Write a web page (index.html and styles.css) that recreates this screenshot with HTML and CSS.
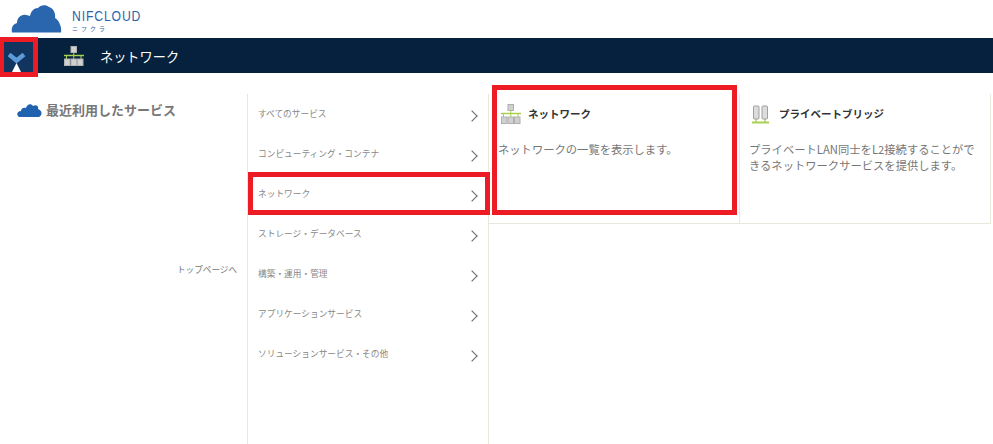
FILE: index.html
```html
<!DOCTYPE html>
<html>
<head>
    <title>NIFCLOUD ネットワーク</title>
    <link rel="stylesheet" href="styles.css">
</head>
<body>
    <div class="logo-bar">
        <svg class="logo-cloud" width="51" height="28" viewBox="0 0 51 28">
            <path fill="#2a66ad" d="M1 27.5 C0 23 2 19 6 18 C6 13 10 9 15 10 C17 10 18 11 19 11 C20 6 23 3 27 3 C29 0 35 -1 38 2 C42 3 45 8 44 13 C48 15 51 22 50 27.5 Z"/>
        </svg>
        <div class="logo-text">
            <div class="logo-name">NIFCLOUD</div>
            <div class="logo-kana">ニフクラ</div>
        </div>
    </div>

    <div class="nav-bar">
        <div class="nav-toggle">
            <svg width="18" height="20" viewBox="0 0 18 20">
                <path fill="none" stroke="#5b9bd8" stroke-width="4.5" d="M1 1.5 L8.5 7.5 L16 1.5"/>
                <path fill="#fff" d="M8.5 10 L13.5 20 L3.5 20 Z"/>
            </svg>
        </div>
        <svg class="net-icon nav-icon" width="20" height="20" viewBox="0 0 20 20">
            <use href="#network"/>
        </svg>
        <div class="nav-title">ネットワーク</div>
    </div>

    <svg class="defs" width="0" height="0">
        <defs>
            <g id="network">
                <rect x="7" y="0.5" width="5.5" height="6" fill="#d0d0d0" stroke="#b0b0b0"/>
                <path d="M9.75 6.5 V9 M2.5 10 V13 M9.75 10 V13 M17 10 V13" stroke="#a8d050" fill="none"/>
                <path d="M0 9.5 H20" stroke="#a8d050" stroke-width="1.5"/>
                <rect x="0.5" y="13" width="5.5" height="6.5" fill="#d0d0d0" stroke="#b0b0b0"/>
                <rect x="7" y="13" width="5.5" height="6.5" fill="#d0d0d0" stroke="#b0b0b0"/>
                <rect x="13.5" y="13" width="5.5" height="6.5" fill="#d0d0d0" stroke="#b0b0b0"/>
            </g>
        </defs>
    </svg>

    <div class="main">
        <div class="side">
            <div class="recent">
                <svg width="25" height="15" viewBox="0 0 25 15">
                    <path fill="#1f62b0" d="M2 15 C-1 13 0 9 4 9 C4 6 7 5 9 6 C10 2 14 1 16 4 C19 2 22 4 21 7 C25 8 26 13 22 15 Z"/>
                </svg>
                <span>最近利用したサービス</span>
            </div>
            <div class="top-link">トップページへ</div>
        </div>

        <div class="menu">
            <div class="menu-item"><span>すべてのサービス</span><i class="chev"></i></div>
            <div class="menu-item"><span>コンピューティング・コンテナ</span><i class="chev"></i></div>
            <div class="menu-item"><span>ネットワーク</span><i class="chev"></i></div>
            <div class="menu-item"><span>ストレージ・データベース</span><i class="chev"></i></div>
            <div class="menu-item"><span>構築・運用・管理</span><i class="chev"></i></div>
            <div class="menu-item"><span>アプリケーションサービス</span><i class="chev"></i></div>
            <div class="menu-item"><span>ソリューションサービス・その他</span><i class="chev"></i></div>
        </div>

        <div class="cards">
            <div class="card">
                <div class="card-head">
                    <svg width="20" height="20" viewBox="0 0 20 20"><use href="#network"/></svg>
                    <span>ネットワーク</span>
                </div>
                <p class="card-text card-text-first">ネットワークの一覧を表示します。</p>
            </div>
            <div class="card">
                <div class="card-head card-head-bridge">
                    <svg width="18" height="19" viewBox="0 0 18 19">
                        <rect x="1.5" y="1" width="5.5" height="13" rx="1" fill="#dcdcdc" stroke="#a0a0a0"/>
                        <rect x="10" y="1" width="5.5" height="13" rx="1" fill="#dcdcdc" stroke="#a0a0a0"/>
                        <path d="M4 14 V17 M13 14 V17" stroke="#8fb840" fill="none"/>
                        <path d="M0 17.5 H17" stroke="#a8d050" stroke-width="2"/>
                    </svg>
                    <span>プライベートブリッジ</span>
                </div>
                <p class="card-text card-text-bridge">プライベートLAN同士をL2接続することができるネットワークサービスを提供します。</p>
            </div>
        </div>
    </div>

    <div class="mark mark-toggle"></div>
    <div class="mark mark-menu"></div>
    <div class="mark mark-card"></div>
</body>
</html>
```

FILE: styles.css
```css
html, body {
    height: 100%;
}
body {
    margin: 0;
    height: 444px;
    overflow: hidden;
    background-color: #fff;
    color: #777;
    font-family: "Noto Sans CJK JP", "Noto Sans", sans-serif;
    position: relative;
}
.logo-bar {
    height: 38px;
    display: flex;
    align-items: flex-start;
    padding: 5px 0 0 11px;
    box-sizing: border-box;
}
.logo-text {
    margin-left: 10px;
    padding-top: 4px;
    color: #2a66ad;
}
.logo-name {
    font-family: "Liberation Sans", sans-serif;
    font-size: 14px;
    line-height: 14px;
    letter-spacing: 1px;
    transform: scaleX(0.87);
    transform-origin: left;
}
.logo-kana {
    margin-top: 2px;
    font-size: 6px;
    line-height: 7px;
    letter-spacing: 3px;
}
.nav-bar {
    height: 35px;
    background-color: #05213d;
    display: flex;
    align-items: center;
}
.nav-toggle {
    width: 33px;
    height: 35px;
    background-color: #123560;
    display: flex;
    justify-content: center;
    align-items: flex-end;
}
.nav-icon {
    margin-left: 31px;
}
.nav-title {
    margin: 1px 0 0 16px;
    color: #fff;
    font-size: 13.2px;
}
.defs {
    position: absolute;
}
.main {
    display: flex;
    padding-top: 21px;
    height: 350px;
}
.side {
    width: 247px;
    flex-shrink: 0;
    border-right: 1px solid #e8e8dc;
    box-sizing: content-box;
}
.recent {
    display: flex;
    align-items: center;
    padding: 5px 0 0 17px;
    height: 20px;
    font-size: 13px;
    font-weight: bold;
    color: #777;
}
.recent span {
    margin-left: 4px;
}
.top-link {
    margin-top: 143px;
    margin-right: 10px;
    text-align: right;
    font-size: 8.6px;
    line-height: 14px;
}
.menu {
    width: 240px;
    flex-shrink: 0;
    border-right: 1px solid #e8e8dc;
}
.menu-item {
    height: 40px;
    display: flex;
    justify-content: space-between;
    padding: 0 11px 0 10px;
    box-sizing: border-box;
    font-size: 8.7px;
    line-height: 40px;
    color: #888;
}
.chev {
    width: 7px;
    height: 7px;
    margin: 18px 1px 0 0;
    border-top: 1.5px solid #666;
    border-right: 1.5px solid #666;
    transform: rotate(45deg);
}
.cards {
    display: flex;
    align-items: flex-start;
}
.card {
    width: 251px;
    height: 130px;
    box-sizing: border-box;
    border-right: 1px solid #e8e8dc;
    border-bottom: 1px solid #e8e8dc;
    padding: 0 10px;
}
.card-head {
    display: flex;
    align-items: center;
    height: 20px;
    margin-top: 10px;
    padding-left: 2px;
    font-size: 10.5px;
    font-weight: bold;
    color: #333;
}
.card-head span {
    margin-left: 7px;
    margin-top: -2px;
}
.card-head-bridge span {
    margin-left: 9px;
}
.card-text {
    margin: 17px 0 0;
    font-size: 11.3px;
    line-height: 16px;
    color: #777;
}
.card-text-first {
    margin-left: -1px;
}
.card-text-bridge {
    margin-left: -1px;
    margin-right: -1px;
}
.mark {
    position: absolute;
    box-sizing: border-box;
    border: 5px solid #ed1c24;
}
.mark-toggle {
    left: 0;
    top: 37px;
    width: 38px;
    height: 40px;
    border-left-width: 4px;
}
.mark-menu {
    left: 248px;
    top: 172px;
    width: 242px;
    height: 43px;
}
.mark-card {
    left: 492px;
    top: 85px;
    width: 245px;
    height: 130px;
}
```
